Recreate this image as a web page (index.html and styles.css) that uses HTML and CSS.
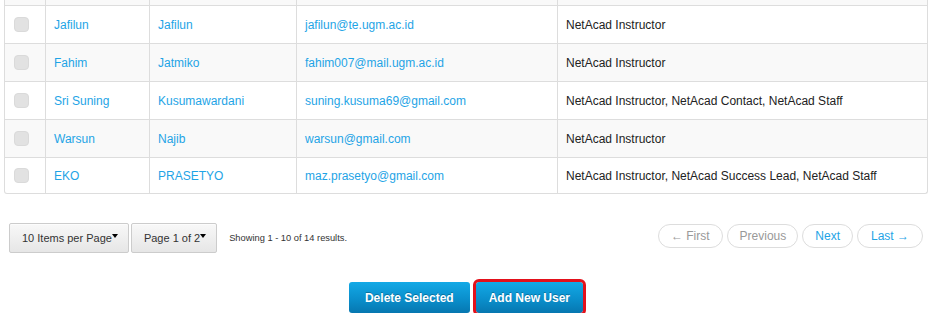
FILE: index.html
```html
<!DOCTYPE html>
<html>
<head>
<meta charset="utf-8">
<link rel="stylesheet" href="styles.css">
</head>
<body>
<div class="page">
  <table class="users">
    <colgroup>
      <col class="c-check"><col class="c-first"><col class="c-last"><col class="c-email"><col class="c-roles">
    </colgroup>
    <tbody>
      <tr class="stub"><td></td><td></td><td></td><td></td><td></td></tr>
      <tr><td><span class="check"></span></td><td><a href="#">Jafilun</a></td><td><a href="#">Jafilun</a></td><td><a href="#">jafilun@te.ugm.ac.id</a></td><td>NetAcad Instructor</td></tr>
      <tr class="alt"><td><span class="check"></span></td><td><a href="#">Fahim</a></td><td><a href="#">Jatmiko</a></td><td><a href="#">fahim007@mail.ugm.ac.id</a></td><td>NetAcad Instructor</td></tr>
      <tr><td><span class="check"></span></td><td><a href="#">Sri Suning</a></td><td><a href="#">Kusumawardani</a></td><td><a href="#">suning.kusuma69@gmail.com</a></td><td>NetAcad Instructor, NetAcad Contact, NetAcad Staff</td></tr>
      <tr class="alt"><td><span class="check"></span></td><td><a href="#">Warsun</a></td><td><a href="#">Najib</a></td><td><a href="#">warsun@gmail.com</a></td><td>NetAcad Instructor</td></tr>
      <tr class="last"><td><span class="check"></span></td><td><a href="#">EKO</a></td><td><a href="#">PRASETYO</a></td><td><a href="#">maz.prasetyo@gmail.com</a></td><td>NetAcad Instructor, NetAcad Success Lead, NetAcad Staff</td></tr>
    </tbody>
  </table>

  <div class="pager">
    <div class="pager-left">
      <button class="drop">10 Items per Page<span class="caret"></span></button>
      <button class="drop">Page 1 of 2<span class="caret"></span></button>
      <span class="showing">Showing 1 - 10 of 14 results.</span>
    </div>
    <div class="pager-right">
      <a class="pill disabled" href="#">&larr; First</a>
      <a class="pill disabled prev" href="#">Previous</a>
      <a class="pill" href="#">Next</a>
      <a class="pill lastp" href="#">Last &rarr;</a>
    </div>
  </div>

  <div class="actions">
    <button class="btn">Delete Selected</button>
    <button class="btn focus">Add New User</button>
  </div>
</div>
</body>
</html>
```

FILE: styles.css
```css
html, body {
  margin: 0;
  padding: 0;
  background: #fff;
}
body {
  font-family: "Liberation Sans", Arial, sans-serif;
  font-size: 12px;
  color: #333;
}
.page {
  padding: 0 5px 0 4px;
}
.users {
  width: 924px;
  border-collapse: separate;
  border-spacing: 0;
  border: 1px solid #dddddd;
  border-top: none;
  border-radius: 0 0 3px 3px;
  table-layout: fixed;
}
.c-check { width: 40px; }
.c-first { width: 104px; }
.c-last { width: 147px; }
.c-email { width: 261px; }
.c-roles { width: auto; }
.users td {
  height: 38px;
  padding: 0 8px;
  border-bottom: 1px solid #dddddd;
  border-left: 1px solid #dddddd;
  vertical-align: middle;
  white-space: nowrap;
  color: #222;
  box-sizing: border-box;
}
.users td:first-child {
  border-left: none;
  padding-left: 9px;
}
.users tr.stub td {
  height: 6px;
  padding: 0;
  background: #f9f9f9;
}
.users tr.alt td {
  background: #f9f9f9;
}
.users tr.last td {
  border-bottom: none;
  height: 35px;
}
.users a {
  color: #1ea4e6;
  text-decoration: none;
}
.check {
  display: block;
  width: 13px;
  height: 13px;
  background: #e2e2e2;
  border: 1px solid #dadada;
  border-radius: 4px;
}
.pager {
  display: flex;
  justify-content: space-between;
  align-items: center;
  margin-top: 29px;
  padding: 0 5px;
}
.pager-left {
  display: flex;
  align-items: center;
  gap: 2px;
}
.drop {
  font-family: "Liberation Sans", Arial, sans-serif;
  font-size: 11px;
  color: #333;
  height: 30px;
  padding: 0 10px 0 12px;
  background: linear-gradient(#f8f8f8, #e6e6e6);
  border: 1px solid #cccccc;
  border-radius: 2px;
  box-shadow: inset 0 1px 0 rgba(255,255,255,0.6);
  cursor: pointer;
  white-space: nowrap;
}
.caret {
  display: inline-block;
  width: 0;
  height: 0;
  border-top: 4px solid #000;
  border-left: 3px solid transparent;
  border-right: 3px solid transparent;
  vertical-align: 4px;
}
.showing {
  font-size: 9.3px;
  color: #333;
  margin-left: 10px;
}
.pager-right {
  display: flex;
  gap: 4px;
  margin-top: -4px;
}
.pill {
  display: inline-flex;
  align-items: center;
  height: 22px;
  padding: 0 12px;
  border: 1px solid #dddddd;
  border-radius: 12px;
  color: #1ea4e6;
  text-decoration: none;
  font-size: 12px;
  white-space: nowrap;
}
.pill.prev { padding: 0 11px 0 12px; }
.pill.lastp { padding: 0 13px; }
.pill.disabled {
  color: #999999;
}
.actions {
  display: flex;
  justify-content: center;
  gap: 6px;
  margin-top: 29px;
}
.btn {
  font-family: "Liberation Sans", Arial, sans-serif;
  font-size: 12px;
  font-weight: bold;
  color: #fff;
  height: 31px;
  padding: 0 16px;
  border: none;
  border-radius: 3px;
  background: linear-gradient(#13a9e6, #0a8fcc 55%, #0677b0);
  text-shadow: 0 -1px 0 rgba(0,0,0,0.25);
  cursor: pointer;
}
.btn.focus {
  outline: 3px solid #e3111b;
  outline-offset: 0;
  padding: 0 13px;
}
```
